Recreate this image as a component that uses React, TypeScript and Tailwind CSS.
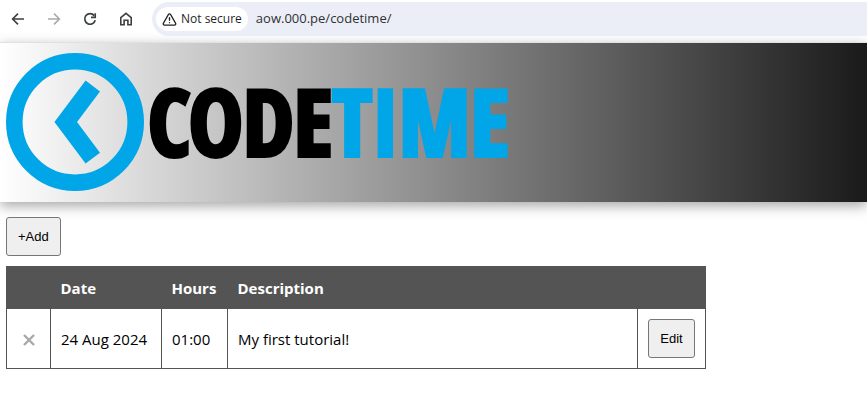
import { AlertTriangle } from 'lucide-react';

type Entry = {
  id: number;
  date: string;
  hours: string;
  description: string;
};

const entries: Entry[] = [
  { id: 1, date: '24 Aug 2024', hours: '01:00', description: 'My first tutorial!' },
];

const buttonClass =
  'h-[39px] rounded-[3px] border border-[#767676] bg-[#efefef] px-[11px] font-["Liberation_Sans",Arial,sans-serif] text-[13px] text-black hover:bg-[#e5e5e5]';

function BackIcon() {
  return (
    <svg viewBox="0 0 16 16" className="h-4 w-4" fill="none" stroke="currentColor" strokeWidth="1.6">
      <path d="M14 8H3M8 2.6 2.6 8 8 13.4" />
    </svg>
  );
}

function ReloadIcon() {
  return (
    <svg viewBox="0 0 16 16" className="h-4 w-4" fill="none" stroke="currentColor" strokeWidth="1.7">
      <path d="M12.2 4.6A5.3 5.3 0 1 0 13.2 9.2" />
      <path d="M13.2 2.2v4.2H9" />
    </svg>
  );
}

function HomeIcon() {
  return (
    <svg viewBox="0 0 16 16" className="h-4 w-4" fill="none" stroke="currentColor" strokeWidth="1.6">
      <path d="M2.8 6.6 8 2.4l5.2 4.2v7.2H9.9V9.2H6.1v4.6H2.8z" />
    </svg>
  );
}

function AddressBar() {
  return (
    <div className="flex h-[42px] items-start bg-white pt-0.5 font-['Open_Sans','Segoe_UI',sans-serif]">
      <div className="flex h-[34px] shrink-0 items-center gap-5 pr-[18px] pl-[10px] text-[#3c4043]">
        <button type="button" aria-label="Back">
          <BackIcon />
        </button>
        <button type="button" aria-label="Forward" disabled className="rotate-180 text-[#a8abad]">
          <BackIcon />
        </button>
        <button type="button" aria-label="Reload">
          <ReloadIcon />
        </button>
        <button type="button" aria-label="Home">
          <HomeIcon />
        </button>
      </div>
      <div className="flex h-[34px] min-w-0 flex-1 items-center gap-2 rounded-l-full bg-[#ebeef7] pl-1">
        <button
          type="button"
          className="flex h-6 shrink-0 items-center gap-1 rounded-full bg-white px-[6px] text-[12px] text-[#1f1f1f]"
        >
          <AlertTriangle className="h-[15px] w-[15px]" strokeWidth={2.2} />
          Not secure
        </button>
        <input
          type="text"
          aria-label="Address"
          defaultValue="aow.000.pe/codetime/"
          className="min-w-0 flex-1 bg-transparent text-[13px] text-[#303134] outline-none"
        />
      </div>
    </div>
  );
}

function Logo() {
  return (
    <a href="/codetime/" className="flex items-center gap-1">
      <svg viewBox="0 0 138 138" className="h-[138px] w-[138px] shrink-0" fill="none" stroke="#00a6e8">
        <circle cx="69" cy="69" r="60.7" strokeWidth="16.6" />
        <path d="M86.8 33 59.7 69l27.1 36.2" strokeWidth="18" />
      </svg>
      <span className="pb-0.5 font-['Open_Sans_Condensed','Roboto_Condensed',sans-serif] text-[91px] leading-none font-black text-black [-webkit-text-stroke:4px_currentColor]">
        CODE<span className="text-[#00a6e8]">TIME</span>
      </span>
    </a>
  );
}

function TimeTable() {
  return (
    <table className="w-[700px] max-w-full border-collapse border border-[#545454] text-left">
      <thead>
        <tr className="h-[42px] bg-[#545454] text-white">
          <th className="w-11" aria-label="Delete" />
          <th className="w-[111px] px-[10px] pt-0.5 font-bold">Date</th>
          <th className="w-[66px] px-[10px] pt-0.5 font-bold">Hours</th>
          <th className="px-[10px] pt-0.5 font-bold">Description</th>
          <th className="w-[68px]" aria-label="Actions" />
        </tr>
      </thead>
      <tbody>
        {entries.map((entry) => (
          <tr key={entry.id} className="h-[60px]">
            <td className="border border-[#545454] text-center">
              <button type="button" aria-label="Delete entry" className="align-middle text-[#a9a9a9]">
                <svg viewBox="0 0 12 12" className="h-3 w-3" stroke="currentColor" strokeWidth="2.4">
                  <path d="m1 1 10 10M11 1 1 11" />
                </svg>
              </button>
            </td>
            <td className="border border-[#545454] px-[10px] pt-0.5 whitespace-nowrap">{entry.date}</td>
            <td className="border border-[#545454] px-[10px] pt-0.5">{entry.hours}</td>
            <td className="border border-[#545454] px-[10px] pt-0.5">{entry.description}</td>
            <td className="border border-[#545454] text-center">
              <button type="button" className={buttonClass}>
                Edit
              </button>
            </td>
          </tr>
        ))}
      </tbody>
    </table>
  );
}

export default function App() {
  return (
    <div className="min-h-screen overflow-x-hidden bg-white">
      <AddressBar />
      <header className="border-t border-[#dfe1e3] bg-linear-to-r/srgb from-white to-[#1a1a1a] px-[6px] pt-[10px] pb-[11px] shadow-[0_4px_12px_rgba(0,0,0,0.35)]">
        <Logo />
      </header>
      <main className="flex flex-col items-start gap-[10px] px-[6px] pt-[15px] font-['Open_Sans','Segoe_UI',sans-serif] text-[15px] text-black">
        <button type="button" className={buttonClass}>
          +Add
        </button>
        <TimeTable />
      </main>
    </div>
  );
}
